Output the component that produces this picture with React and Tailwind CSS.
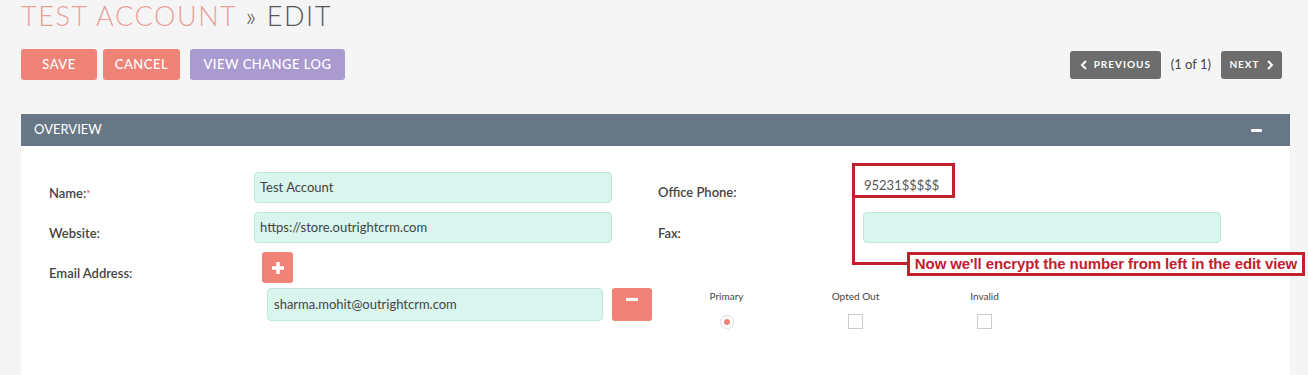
import React from "react";

function Chevron({ dir }) {
  return (
    <svg width="8" height="10" viewBox="0 0 8 10" className="inline-block">
      {dir === "left" ? (
        <path d="M6 1 L2 5 L6 9" stroke="white" strokeWidth="2" fill="none" />
      ) : (
        <path d="M2 1 L6 5 L2 9" stroke="white" strokeWidth="2" fill="none" />
      )}
    </svg>
  );
}

export default function App() {
  const font = { fontFamily: "Lato, 'Open Sans', sans-serif" };
  return (
    <div
      className="relative w-[1308px] h-[375px] overflow-hidden bg-[#f5f5f5] text-[#333]"
      style={font}
    >
      {/* Title */}
      <div className="pl-[21px] h-[46px] text-[27px] font-light tracking-[1.6px] leading-[32px]">
        <span className="text-[#e9a09a]">TEST ACCOUNT</span>
        <span className="text-[#555]"> » EDIT</span>
      </div>

      {/* Action row */}
      <div className="flex items-center pl-[21px] pr-[26px] h-[35px] pt-[2px]">
        <button className="h-[31px] w-[76px] rounded-[3px] bg-[#f08377] text-white text-[13px] tracking-[0.5px] font-medium">
          SAVE
        </button>
        <button className="ml-[6px] h-[31px] w-[77px] rounded-[3px] bg-[#f08377] text-white text-[13px] tracking-[0.5px] font-medium">
          CANCEL
        </button>
        <button className="ml-[10px] h-[31px] w-[155px] rounded-[3px] bg-[#a99ad0] text-white text-[13px] tracking-[0.5px] font-medium">
          VIEW CHANGE LOG
        </button>
        <div className="ml-auto flex items-center">
          <button className="flex items-center justify-center gap-[6px] h-[28px] w-[91px] rounded-[3px] bg-[#6d6d6d] text-white text-[10px] font-bold tracking-[1px]">
            <Chevron dir="left" />
            PREVIOUS
          </button>
          <span className="mx-[10px] text-[13px] text-[#444]">(1 of 1)</span>
          <button className="flex items-center justify-center gap-[6px] h-[28px] w-[61px] rounded-[3px] bg-[#6d6d6d] text-white text-[10px] font-bold tracking-[1px]">
            NEXT
            <Chevron dir="right" />
          </button>
        </div>
      </div>

      {/* Panel */}
      <div className="mt-[33px] ml-[21px] w-[1269px] bg-white">
        <div className="flex items-center justify-between h-[32px] bg-[#687785] pl-[13px] pr-[28px] text-white text-[13px]">
          <span>OVERVIEW</span>
          <span className="block w-[11px] h-[3px] bg-white rounded-[1px]" />
        </div>

        <div className="pl-[28px] pt-[26px] pb-[60px] flex">
          {/* Left half */}
          <div className="w-[609px] shrink-0 flex flex-col">
            <div className="flex h-[31px]">
              <div className="w-[205px] shrink-0 pt-[13px] text-[13px] font-semibold text-[#444] leading-[16px]">
                Name:<span className="text-[#e0605a] text-[10px] align-top">*</span>
              </div>
              <div className="w-[358px] h-[31px] rounded-[4px] border border-[#bfe8dc] bg-[#d8f5ee] px-[5px] flex items-center text-[13px] text-[#444]">
                Test Account
              </div>
            </div>
            <div className="flex h-[31px] mt-[9px]">
              <div className="w-[205px] shrink-0 pt-[13px] text-[13px] font-semibold text-[#444] leading-[16px]">
                Website:
              </div>
              <div className="w-[358px] h-[31px] rounded-[4px] border border-[#bfe8dc] bg-[#d8f5ee] px-[5px] flex items-center text-[13px] text-[#444]">
                https://store.outrightcrm.com
              </div>
            </div>
            <div className="flex mt-[9px]">
              <div className="w-[205px] shrink-0 pt-[13px] text-[13px] font-semibold text-[#444] leading-[16px]">
                Email Address:
              </div>
              <div className="flex flex-col shrink-0">
                <button className="ml-[8px] w-[31px] h-[31px] rounded-[3px] bg-[#f08377] flex items-center justify-center">
                  <svg width="14" height="14" viewBox="0 0 14 14">
                    <path d="M7 1 V13 M1 7 H13" stroke="white" strokeWidth="3.5" />
                  </svg>
                </button>
                <div className="flex mt-[5px] items-start">
                  <div className="ml-[13px] w-[336px] shrink-0 h-[33px] rounded-[4px] border border-[#bfe8dc] bg-[#d8f5ee] px-[6px] flex items-center text-[13px] text-[#444]">
                    sharma.mohit@outrightcrm.com
                  </div>
                  <button className="ml-[9px] w-[40px] shrink-0 h-[33px] rounded-[3px] bg-[#f08377] flex items-start justify-center pt-[10px]">
                    <span className="block w-[12px] h-[3px] bg-white" />
                  </button>
                  <div className="ml-[10px] flex pt-[2px] shrink-0">
                    {["Primary", "Opted Out", "Invalid"].map((l, i) => (
                      <div key={l} className="w-[129px] flex flex-col items-center">
                        <span className="text-[10px] text-[#444] leading-[12px]">{l}</span>
                        <div className="mt-[12px] w-[15px] h-[15px] flex items-center justify-center">
                          {i === 0 ? (
                            <span className="w-[14px] h-[14px] rounded-full border border-[#ddd] flex items-center justify-center">
                              <span className="w-[6px] h-[6px] rounded-full bg-[#f08377]" />
                            </span>
                          ) : (
                            <span className="w-[15px] h-[15px] border border-[#ccc] bg-white" />
                          )}
                        </div>
                      </div>
                    ))}
                  </div>
                </div>
              </div>
            </div>
          </div>

          {/* Right half */}
          <div className="w-[609px] shrink-0 flex flex-col">
            <div className="flex h-[31px]">
              <div className="w-[205px] shrink-0 pt-[12px] text-[13px] font-semibold text-[#444] leading-[16px]">
                Office Phone:
              </div>
              <div className="pl-[1px] pt-[4px] text-[13px] text-[#555]">95231$$$$$</div>
            </div>
            <div className="flex h-[31px] mt-[9px]">
              <div className="w-[205px] shrink-0 pt-[13px] text-[13px] font-semibold text-[#444] leading-[16px]">
                Fax:
              </div>
              <div className="w-[358px] h-[31px] rounded-[4px] border border-[#bfe8dc] bg-[#d8f5ee]" />
            </div>
          </div>
        </div>
      </div>

      {/* Annotation overlay */}
      <div className="absolute left-[852px] top-[163px] w-[103px] h-[35px] border-[3px] border-[#c3202e]" />
      <div className="absolute left-[852px] top-[196px] w-[3px] h-[69px] bg-[#c3202e]" />
      <div className="absolute left-[852px] top-[262px] w-[56px] h-[3px] bg-[#c3202e]" />
      <div
        className="absolute left-[907px] top-[252px] w-[398px] h-[24px] border-[3px] border-[#c3202e] bg-white flex items-center justify-center text-[#c3202e] text-[15px] font-bold tracking-[-0.1px]"
        style={{ fontFamily: "'Liberation Sans', Arial, sans-serif" }}
      >
        Now we'll encrypt the number from left in the edit view
      </div>
    </div>
  );
}
